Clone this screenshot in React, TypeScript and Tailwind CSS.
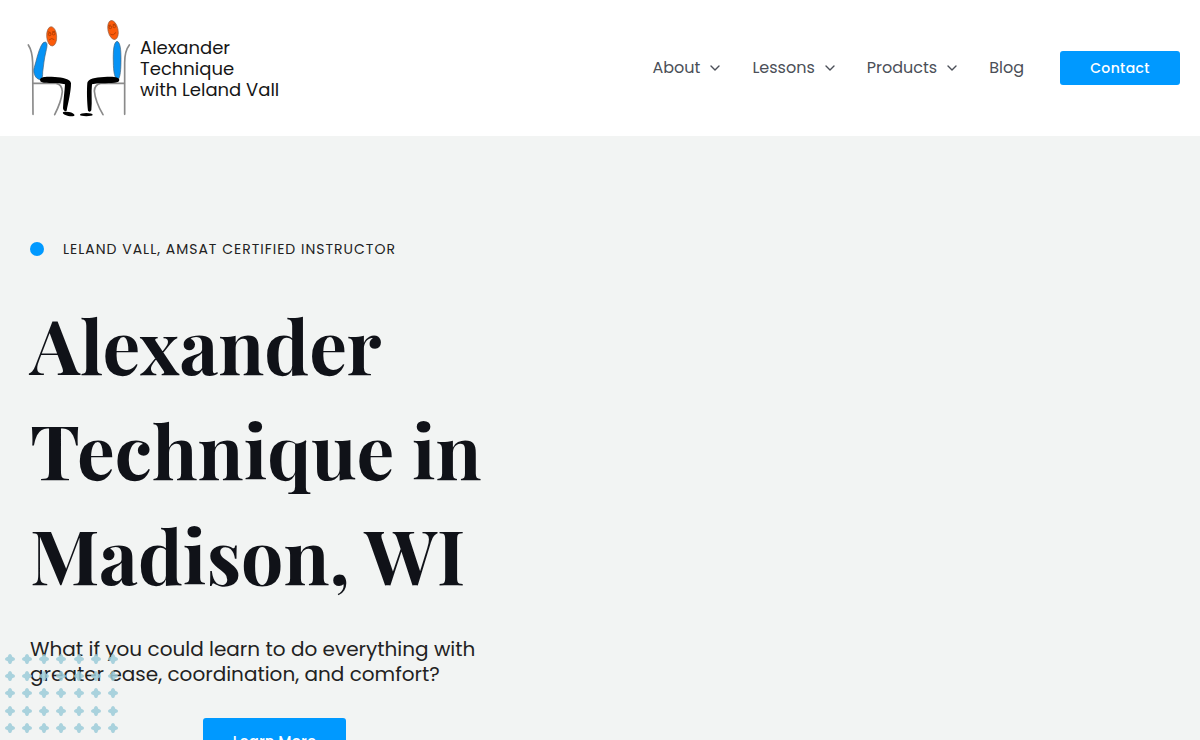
import * as React from "react";

const navLinks: { title: string; href: string; menu: boolean }[] = [
  { title: "About", href: "#about", menu: true },
  { title: "Lessons", href: "#lessons", menu: true },
  { title: "Products", href: "#products", menu: true },
  { title: "Blog", href: "#blog", menu: false },
];

const plusColumns = [10, 27, 44, 61, 79, 96, 113];
const plusRows = [9, 26, 43, 61, 78];

function Figures() {
  return (
    <svg viewBox="0 0 360 345" className="h-[115px] w-[120px] shrink-0" fill="none" aria-hidden="true">
      {/* Chairs */}
      <g stroke="#8a8a8a" strokeWidth="5" strokeLinecap="round">
        <path d="M25 102Q37 120 38 155L39 310" />
        <path d="M40 217H108Q126 220 127 242Q124 272 104 311" />
        <path d="M328 102Q314 120 314 155V310" />
        <path d="M313 217H242Q224 220 223 240Q226 272 249 311" />
      </g>

      {/* Slumped sitter */}
      <path d="M76 93C84 95 81 108 78 121C72 145 71 163 68 183C68 204 66 213 50 201C43 194 39 181 43 169C50 145 54 124 63 105Q69 92 76 93Z" fill="#0693f5" stroke="#426078" strokeWidth="2" />
      <path d="M60 206C62 196 82 196 105 198C127 199 152 204 153 217C153 242 145 274 140 299Q131 305 129 292C130 268 134 240 135 220C112 214 79 219 66 214Q60 212 60 206Z" fill="#000" />
      <ellipse cx="146" cy="309" rx="18" ry="6" transform="rotate(12 146 309)" fill="#000" />
      <ellipse cx="95" cy="76" rx="15" ry="29" transform="rotate(-4 95 76)" fill="#fc5b0a" stroke="#956044" strokeWidth="2" />
      <g stroke="#983300" strokeWidth="2">
        <path d="M83 62L92 65M96 63L105 61M87 87Q95 79 103 86" />
        <circle cx="89" cy="70" r="4" />
        <circle cx="101" cy="68" r="4" />
      </g>

      {/* Upright sitter */}
      <path d="M291 91C301 93 303 117 303 145C303 174 301 201 294 205C284 206 280 181 280 153C279 120 281 94 291 91Z" fill="#0693f5" stroke="#426078" strokeWidth="2" />
      <path d="M298 207C298 197 278 196 252 198C225 199 205 204 202 215C200 238 201 273 204 299Q210 306 214 298C217 270 213 244 216 220C239 214 274 219 291 214Q298 212 298 207Z" fill="#000" />
      <ellipse cx="199" cy="311" rx="19" ry="5" fill="#000" />
      <ellipse cx="279" cy="57" rx="15" ry="29" transform="rotate(-12 279 57)" fill="#fc5b0a" stroke="#956044" strokeWidth="2" />
      <g stroke="#983300" strokeWidth="2">
        <path d="M265 44L272 42M278 41L286 39M271 69Q281 76 287 64" />
        <circle cx="271" cy="49" r="4" />
        <circle cx="283" cy="46" r="4" />
      </g>
    </svg>
  );
}

function Chevron() {
  return (
    <svg viewBox="0 0 10 10" className="size-[10px]" fill="none" stroke="currentColor" strokeWidth="1.4" aria-hidden="true">
      <path d="M1 3L5 7L9 3" strokeLinecap="round" strokeLinejoin="round" />
    </svg>
  );
}

function PlusPattern() {
  return (
    <svg
      viewBox="0 0 124 88"
      className="pointer-events-none absolute top-[514px] left-0 h-[88px] w-[124px]"
      fill="#9ccbd8"
      fillOpacity="0.85"
      aria-hidden="true"
    >
      {plusRows.map((y) =>
        plusColumns.map((x) => (
          <path
            key={`${x}-${y}`}
            transform={`translate(${x} ${y})`}
            d="M0-5Q1.4-5 1.8-3.4L2.2-2.2L3.4-1.8Q5-1.4 5 0Q5 1.4 3.4 1.8L2.2 2.2L1.8 3.4Q1.4 5 0 5Q-1.4 5-1.8 3.4L-2.2 2.2L-3.4 1.8Q-5 1.4-5 0Q-5-1.4-3.4-1.8L-2.2-2.2L-1.8-3.4Q-1.4-5 0-5Z"
          />
        ))
      )}
    </svg>
  );
}

function Header() {
  return (
    <header className="flex min-h-[136px] items-center justify-between bg-white px-5">
      <a href="#home" className="flex items-center text-[18px] leading-[21px] text-[#161616]">
        <Figures />
        <span>
          Alexander
          <br />
          Technique
          <br />
          with Leland Vall
        </span>
      </a>

      <nav className="flex items-center gap-9">
        <ul className="flex items-center gap-8 text-base text-[#4b4f58]">
          {navLinks.map((link) => (
            <li key={link.href}>
              <a href={link.href} className="flex items-center gap-[10px] hover:text-[#0099ff]">
                {link.title}
                {link.menu && <Chevron />}
              </a>
            </li>
          ))}
        </ul>
        <a
          href="#contact"
          className="flex h-[34px] w-[120px] items-center justify-center rounded-[3px] bg-[#0099ff] text-sm font-medium tracking-wide text-white"
        >
          Contact
        </a>
      </nav>
    </header>
  );
}

export default function App() {
  return (
    <div className="min-h-screen bg-[#f2f4f3] font-['Poppins',sans-serif]">
      <Header />

      <main className="relative px-[30px] pt-[101px] pb-20">
        <div className="max-w-[489px]">
          <p className="flex items-center gap-[19px] text-sm leading-6 tracking-[1px] text-[#222] uppercase">
            <span className="size-[14px] rounded-full bg-[#0099ff]" />
            Leland Vall, AMSAT Certified Instructor
          </p>

          <h1 className="mt-[31px] font-['Playfair_Display',serif] text-[75px] leading-[105px] font-bold text-[#101218]">
            Alexander Technique in Madison, WI
          </h1>

          <p className="mt-[30px] text-xl leading-[25px] text-[#222]">
            What if you could learn to do everything with greater ease, coordination, and comfort?
          </p>

          <div className="mt-[31px] flex justify-center">
            <a
              href="#learn-more"
              className="flex h-12 w-[143px] items-center justify-center rounded-[3px] bg-[#0099ff] text-[15px] font-medium text-white"
            >
              Learn More
            </a>
          </div>
        </div>

        <PlusPattern />
      </main>
    </div>
  );
}
